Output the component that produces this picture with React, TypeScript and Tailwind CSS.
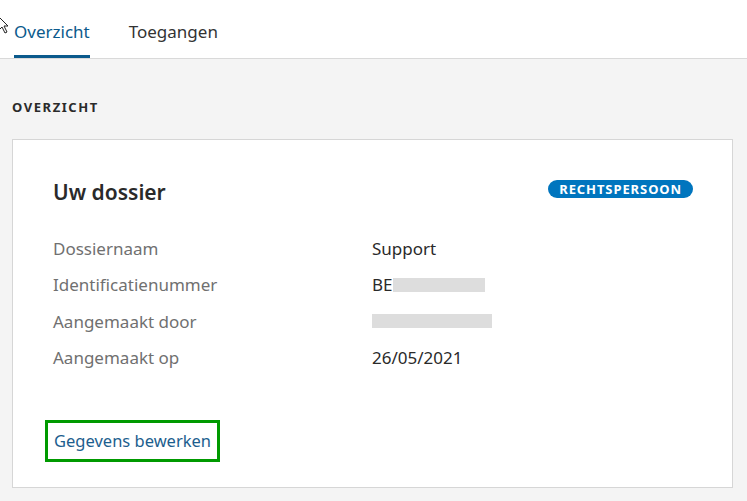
const rows = [
  { label: "Dossiernaam", value: "Support" },
  { label: "Identificatienummer", value: "BE", blurred: "w-[92px]" },
  { label: "Aangemaakt door", value: "", blurred: "w-[120px]" },
  { label: "Aangemaakt op", value: "26/05/2021" },
];

function Cursor() {
  return (
    <svg className="absolute left-[-2px] top-[16px]" width="12" height="18" viewBox="0 0 12 18">
      <path d="M1 1 L1 14 L4 11 L7 17 L9 16 L6 10 L10 10 Z" fill="#fff" stroke="#222" strokeWidth="1" />
    </svg>
  );
}

export default function App() {
  return (
    <div className="h-[501px] w-[747px] overflow-hidden bg-[#f4f4f4] font-['Noto_Sans',sans-serif] text-[#333]">
      <div className="relative flex h-[59px] items-end gap-[39px] border-b border-[#d9d9d9] bg-white pl-[14px]">
        <Cursor />
        <div className="border-b-[3px] border-[#0b5a8c] pb-[11px] text-[17px] text-[#0b5a8c]">Overzicht</div>
        <div className="pb-[14px] text-[17px] text-[#333]">Toegangen</div>
      </div>

      <div className="px-[12px]">
        <h2 className="mt-[40px] text-[13px] font-bold leading-4 tracking-[0.12em] text-[#2a2a2a]">OVERZICHT</h2>

        <div className="mt-[24px] h-[349px] w-[721px] border border-[#d6d6d6] bg-white px-[40px] pt-[38px]">
          <div className="flex items-start justify-between">
            <h3 className="text-[21px] font-semibold leading-7 text-[#2a2a2a]">Uw dossier</h3>
            <span className="mr-[-1px] mt-[2px] rounded-full bg-[#0075be] px-[11px] py-[1px] text-[13px] font-bold leading-4 tracking-[0.07em] text-white">
              RECHTSPERSOON
            </span>
          </div>

          <dl className="mt-[30px] flex flex-col gap-[12px]">
            {rows.map((r) => (
              <div key={r.label} className="flex h-[24.5px] items-center text-[17px]">
                <dt className="w-[319px] text-[#707070]">{r.label}</dt>
                <dd className="flex items-center text-[#2a2a2a]">
                  {r.value}
                  {r.blurred && <span className={`inline-block h-[14px] ${r.blurred} bg-[#d4d4d4] opacity-80`} />}
                </dd>
              </div>
            ))}
          </dl>

          <a className="ml-[-8px] mt-[50px] inline-block border-[3px] border-[#009a00] px-[6px] py-[6px] text-[16.5px] leading-6 text-[#1c5e8e]" href="#">
            Gegevens bewerken
          </a>
        </div>
      </div>
    </div>
  );
}
